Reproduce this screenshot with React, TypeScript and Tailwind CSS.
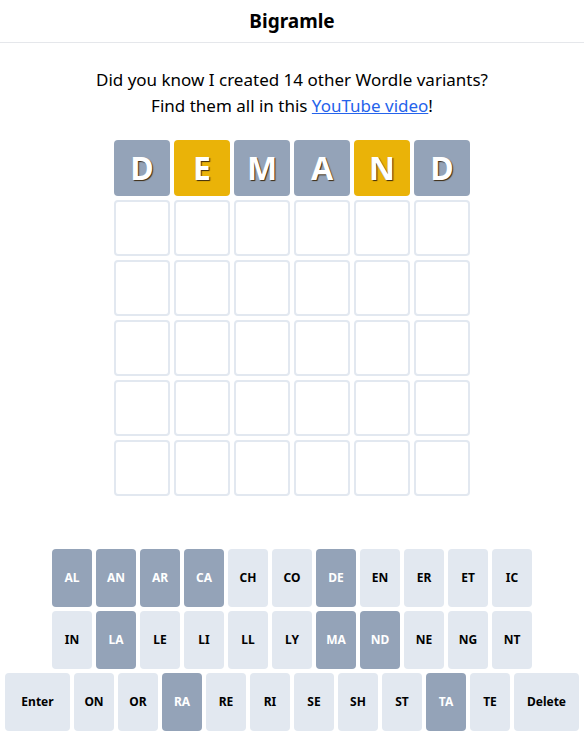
const guess = ["D", "E", "M", "A", "N", "D"];
const colours = ["gray", "yellow", "gray", "gray", "yellow", "gray"];

const rows = [
  ["AL", "AN", "AR", "CA", "CH", "CO", "DE", "EN", "ER", "ET", "IC"],
  ["IN", "LA", "LE", "LI", "LL", "LY", "MA", "ND", "NE", "NG", "NT"],
  ["Enter", "ON", "OR", "RA", "RE", "RI", "SE", "SH", "ST", "TA", "TE", "Delete"],
];

const used = ["AL", "AN", "AR", "CA", "DE", "LA", "MA", "ND", "RA", "TA"];

const Tile = ({ letter, colour }: { letter?: string; colour?: string }) => {
  if (!letter) {
    return <div className="h-14 w-14 rounded border-2 border-[#e2e8f0]" />;
  }
  return (
    <div
      className={`flex h-14 w-14 items-center justify-center rounded text-[32px] font-bold text-white [text-shadow:1px_1px_1px_#3b2a10] ${
        colour === "yellow" ? "bg-[#eab308]" : "bg-[#94a3b8]"
      }`}
    >
      {letter}
    </div>
  );
};

const Key = ({ label }: { label: string }) => {
  const wide = label === "Enter" || label === "Delete";
  const dark = used.includes(label);
  return (
    <button
      className={`flex h-[58px] items-center justify-center rounded text-xs font-bold ${
        wide ? "w-[65px]" : "w-10"
      } ${dark ? "bg-[#94a3b8] text-white" : "bg-[#e2e8f0] text-black"}`}
    >
      {label}
    </button>
  );
};

export default function App() {
  return (
    <div className="flex min-h-screen flex-col bg-white font-['Noto_Sans',sans-serif] text-black">
      <header className="flex h-[43px] items-center justify-center border-b border-gray-200">
        <h1 className="text-[19px] font-bold">Bigramle</h1>
      </header>

      <div className="mt-6 text-center text-[17px] leading-[26px]">
        <p>Did you know I created 14 other Wordle variants?</p>
        <p>
          Find them all in this{" "}
          <a href="#" className="text-[#2563eb] underline">
            YouTube video
          </a>
          !
        </p>
      </div>

      <div className="mx-auto mt-[21px] grid grid-cols-6 gap-1">
        {guess.map((l, i) => (
          <Tile key={i} letter={l} colour={colours[i]} />
        ))}
        {Array.from({ length: 30 }).map((_, i) => (
          <Tile key={"e" + i} />
        ))}
      </div>

      <div className="mt-[53px] flex flex-col items-center gap-1 pb-[7px]">
        {rows.map((row, i) => (
          <div key={i} className="flex gap-1">
            {row.map((k) => (
              <Key key={k} label={k} />
            ))}
          </div>
        ))}
      </div>
    </div>
  );
}
